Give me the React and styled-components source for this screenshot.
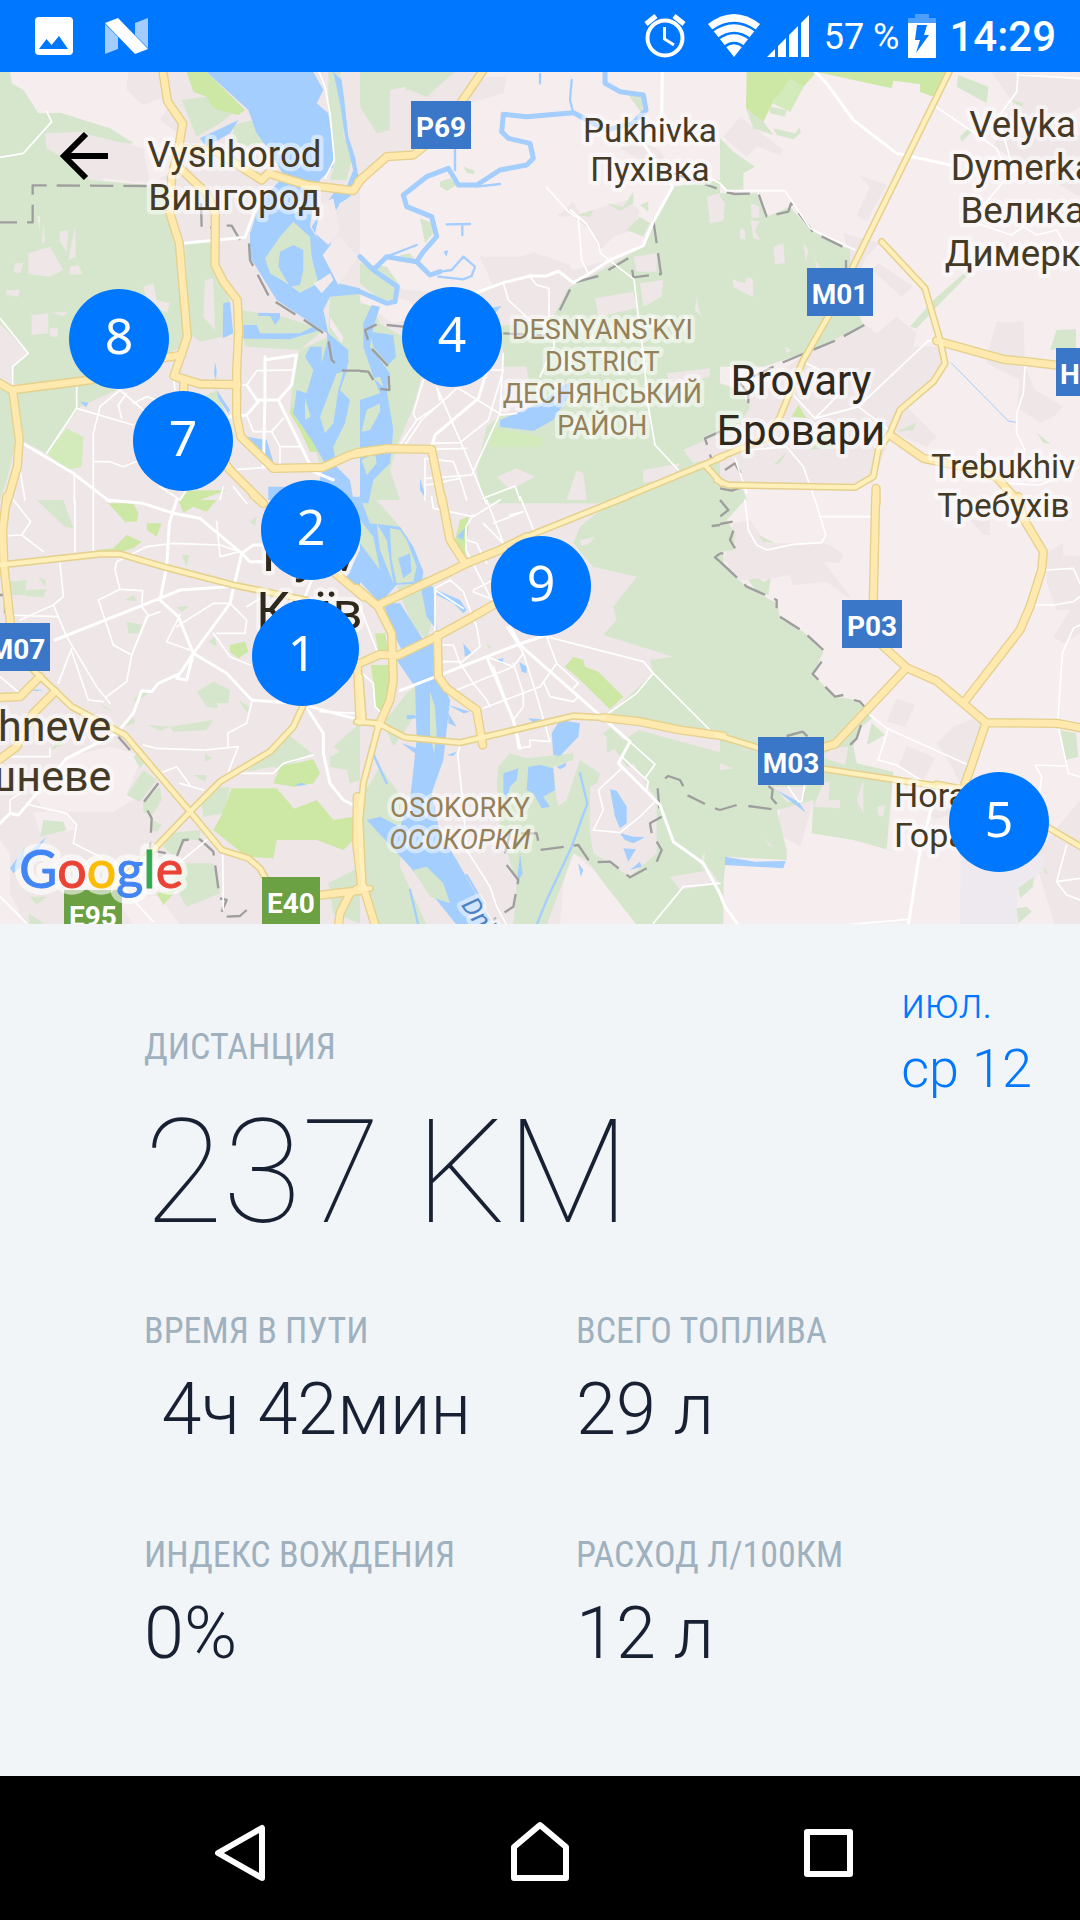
import React from "react";
import styled, { createGlobalStyle } from "styled-components";

const GlobalStyle = createGlobalStyle`
  *, *::before, *::after { box-sizing: border-box; }
  body { margin: 0; background: #f1f5f8; font-family: Roboto, "Noto Sans", sans-serif; }
  h1, p, dl, dd, ul { margin: 0; padding: 0; }
  button { border: 0; padding: 0; background: none; cursor: pointer; }
  svg { display: block; }
`;

const Screen = styled.div`
    display: flex;
    flex-direction: column;
    min-height: 100vh;
`;

/* ---------- status bar ---------- */

const StatusBar = styled.header`
    display: flex;
    align-items: center;
    justify-content: space-between;
    height: 72px;
    padding: 0 24px 0 35px;
    background: #0077ff;
    color: #fff;
`;

const StatusGroup = styled.div`
    display: flex;
    align-items: center;
    gap: ${p => p.$gap}px;
`;

const Battery = styled.span`
    padding: 2px 2px 0 8px;
    font-size: 36px;
    line-height: 44px;
`;

const Clock = styled.time`
    padding: 2px 0 0 6px;
    font-size: 42px;
    font-weight: 500;
    line-height: 48px;
`;

/* ---------- map ---------- */

const MapArea = styled.section`
    position: relative;
    width: 100%;
    aspect-ratio: 90 / 71;
    overflow: hidden;
    background: #eee6e7;
`;

const MapSvg = styled.svg`
    width: 100%;
    height: 100%;
`;

const BackButton = styled.button`
    position: absolute;
    left: 48px;
    top: 48px;
    width: 72px;
    height: 72px;
`;

const Pin = styled.li`
    position: absolute;
    left: ${p => p.$x / 10.8}%;
    top: ${p => p.$y / 8.52}%;
    width: 100px;
    height: 100px;
    margin: -50px 0 0 -50px;
    border-radius: 50%;
    background: #0077ff;
    color: #fff;
    font-family: "Noto Sans", sans-serif;
    font-size: 50px;
    line-height: 92px;
    text-align: center;
    list-style: none;
`;

/* Sectors of the map, 3 units per pixel, each one with its own origin */
const sectors = [
    {
        x: 0, y: -6,
        rural: "M30 0H385L380 60 430 105 480 85 505 110 480 150 540 195 530 300 430 350 300 340 400 215 300 180 110 130 70 60 30 40Z",
        woods: "M0 0H30L35 40 70 60 115 130 180 128 330 175 400 220 300 215 250 185 140 190V235L185 260 270 330 440 345 500 350 520 500 545 560 560 700 550 830 500 850 270 940 230 950 0 940ZM555 520L640 510V600L690 690 665 800 600 815 570 790ZM545 90L620 80 700 130 660 160 590 200ZM700 165L760 150 800 215 750 230 700 215ZM720 720L850 740 970 780 900 840 735 830ZM985 6H1020L1035 100 1030 200 1060 250 1040 330 990 330 1005 280 1000 200 985 120ZM990 680L1080 665V1160L960 1190 940 1110 870 1030 880 900 900 840 985 800ZM40 960L270 930 350 960 240 1010 140 1150 60 1110ZM0 960H35L50 1110 20 1230 0 1290ZM610 980L650 960 680 1040 610 1030Z",
        clear: "M85 550L150 530 190 600 150 620 85 612ZM178 485L205 480 200 545 180 515ZM225 470L228 560 205 570ZM20 660L60 660 55 680 20 675ZM95 735L145 730V790L95 795ZM45 580L70 580 60 610 40 605ZM235 585L248 612 208 615 210 590ZM130 460L135 515 125 520ZM110 435L120 440 120 485ZM0 760L85 850 40 890 35 945 0 930ZM430 650L460 640 470 690 510 700 500 730 440 690ZM615 630L640 625 645 780 610 740ZM135 190H250L430 235 450 340 270 320 235 260 140 235ZM150 728L205 725 190 738ZM150 775H173V800H150Z",
        parks: "M560 6H620L735 120 715 135 640 115 620 80 580 65ZM875 1000L890 1050 950 1110 955 1145 930 1145 900 1080 870 1030ZM560 1262L680 1260 600 1290H540Z",
        pale: "M200 1075L250 1100 245 1190 200 1200 140 1150Z",
        water: "M620 6H940L970 60 950 100 985 130 1000 230V290L960 330 860 330 800 230 770 190 745 120ZM600 205L715 150 690 190 620 230ZM790 385L860 310 960 330 940 400 930 470 985 560 1015 640 1080 655V672L990 680 970 720 985 790 1045 840V880L1030 905 990 870 980 790 920 750 830 690 780 610 750 560V490L770 430ZM1000 6L1025 30 1035 110 1045 200 1065 260 1075 320 1050 380 1020 400 980 470 1010 600 980 560 935 470 1000 370 1040 350 1060 300 1035 200 1020 100ZM730 765H770L780 790 900 790 940 770 960 780 870 808 730 806ZM670 700L690 695 700 790 668 805ZM775 728L840 730 840 745 825 765 810 738 775 738ZM985 800L1045 850 1040 905 1020 960 1050 990 1035 1060 1000 1130 1010 1190 1050 1230 1060 1290H940L975 1180 935 1110 880 1030 890 960 920 970 940 900 915 860 930 830 965 830V880ZM740 1100L800 1110 820 1175 780 1165ZM650 960L690 1020 685 1030 655 985ZM805 1250H900V1290H805ZM645 875L650 900 648 930 642 910ZM240 995L265 998 258 1012Z",
        islands: "M880 455L930 500 935 560 955 640 900 668 860 640 810 610 795 565 840 500ZM1010 910L1030 905 1015 960 1000 1060 975 1090 960 1040ZM915 985L932 1040 915 1050Z",
        lakes: "M840 545L880 525 910 540V600L900 645 870 650 835 590Z",
        sands: "M945 490L965 400 1000 385 1020 480 985 525ZM1015 495L1075 560 1015 645 968 555ZM940 640L960 630 990 610 1000 630 965 670ZM990 740L1030 800 1025 820 990 770Z",
        main: "M488 0L503 95 548 160 535 240 515 320 510 430 538 520 548 640 562 800 522 918 600 942 712 944M535 290L620 370 646 430 645 585 670 635 712 690 716 780 710 900V1040L722 1100 820 1195 970 1192 1050 1155 1160 1136M535 235L650 245 785 330 805 310 920 345 1060 362 1085 325M-10 935L35 960 270 930 450 870 545 855M38 960L58 1110 52 1190 20 1300M552 930L550 1000 690 1200 790 1300",
        street: "M0 262L70 250 155 155 140 125M0 745L85 850 38 890V950M230 950V1015L140 1150M230 1015L400 1065M280 1290V1090L300 1010 360 960 430 1020M380 970L355 1005 365 1045M400 1000L440 980 470 990M710 945H740L770 902 875 900M740 1035L760 1085 815 1085 850 1045M815 1085L840 1130V1180M840 1130H900M690 1200L800 1192M955 0L975 50 990 130 1003 270 975 325M280 1175L330 1175 370 1190 420 1170M223 1215V1300M60 1200L75 1290M520 920L525 960M480 1250L540 1290 560 1260M670 1250L660 1290M700 1250L740 1300",
        avenue: "M550 520L735 502 765 420M60 1115L220 1210 330 1295M795 870L890 855 875 945 835 990 940 1205 1000 1230M795 860V990L790 1190M740 945L770 990 835 990M690 1040L740 1035 775 995",
        border: "M440 348L98 346V457H0M603 400L605 475 640 472M680 467L695 467 720 510M747 520L750 570 810 685 900 742 965 785 985 810 995 870 1030 902 1080 902"
    },
    {
        x: 1080, y: -6,
        rural: "M300 80L380 0H1080V360L940 350 880 450 850 520 780 560 640 600 510 560 360 560 400 650 340 670 130 660 0 560V340L100 260 240 200ZM0 660L140 690 200 740 100 760 0 690Z",
        urban: "M358 555L420 585 520 547 630 585 640 640 600 605 430 635 400 625ZM640 440L700 420 800 390 840 420 820 480 760 500 720 540 690 480ZM590 440L640 395 660 430 610 440ZM380 20L440 20 430 70 330 98 320 60ZM780 235L850 215 900 240 930 300 870 285Z",
        woods: "M0 0H290L200 80 150 60 90 70V180L50 190 0 110ZM940 350L1080 330V1300H370L350 1200 380 1070 430 1030V860L420 770 580 740 625 655 690 620 850 530 880 450ZM0 580L80 590 115 640 110 690 60 690 0 640ZM0 700L40 710 60 760 130 800 180 850 190 900 160 1010 110 1130 90 1200 120 1290H0ZM240 335L270 325 290 345 260 363 240 350ZM310 290L340 300 345 312 320 308ZM180 445L220 460 220 490 195 520ZM650 435L700 420 690 440ZM740 400L790 410 820 365 820 400 780 422ZM805 75L850 80 845 130 820 95ZM800 480L840 440 870 460 850 500ZM120 555L150 550 170 575 140 580ZM840 405L865 395V425Z",
        clear: "M705 685L820 665 830 715 715 740ZM840 640L910 630 905 680 850 710ZM430 890L500 890 520 1020 400 1040ZM970 1140L1080 1090V1160L1000 1180ZM850 1200L960 1180 940 1220 850 1240ZM410 1220L470 1195 525 1220 450 1260ZM650 1200L670 1210 680 1290H620ZM1040 380L1080 370V455L1050 460ZM920 910L1050 895V920L930 950ZM90 60L135 50 150 80 130 135 90 130ZM1010 680L1005 720 1025 740 1015 710ZM820 560L890 550V605H830Z",
        pale: "M400 1075L545 1100V1130H390Z",
        water: "M420 1050L540 1000 630 935 625 980 580 1050 520 1083 420 1070ZM30 785L100 795 108 860 85 885 40 830ZM35 705L60 710 40 770 30 830 90 910 80 960 90 1020 100 1080 90 1180 40 1230 25 1300H0V990L60 970 40 920 10 830V760ZM180 1225L200 1290 180 1260ZM250 545L265 540 260 560ZM385 715L425 708 400 735Z",
        islands: "M20 1020L60 1000 60 1025 30 1080 5 1085ZM5 1170L45 1150 50 1180 20 1215ZM40 925L60 920 70 950Z",
        river: "M735 0V40L780 65 850 75 858 120 820 160 740 180 640 128 500 140 430 133 425 185 445 205 510 220 520 265 500 285 420 300 350 345 295 345 265 295 200 320 130 375 140 410 215 440 230 500 190 545 170 575 80 560 40 600 0 560M40 600L112 650 105 695 80 700 0 665M170 575L210 615 240 605",
        brook: "M635 30L630 90 640 130M285 240V300M350 350L420 342M240 605L275 600 310 560 345 590 335 618 310 628 235 620M80 560L170 525M260 463L330 462M307 463V495M540 12V40",
        main: "M-5 335L80 260 160 255 240 190 370 0M-10 1148L80 1136 215 1138 247 1300",
        light: "M750 1300L1090 1160M1035 1185L1085 1240",
        street: "M560 352L625 425 655 445 665 570 685 612M632 420L678 460 715 520 722 550 822 628 835 740 850 850 865 1010 885 1125 955 1200M430 640L445 690 510 750 580 770 582 830 540 920M510 620L530 645 567 655V740M230 950L330 1180 378 1300M295 955L425 1035 470 1030M430 850L420 1030 335 1215M290 955L230 1010 170 1050 120 1125M270 975L185 1050 135 1125M190 930L160 1030 170 1050M215 1120L300 1118 385 1050 430 900 395 900M215 1138L320 1135M195 1290V1165L280 1175 300 1225 200 1245M335 1215L200 1225M370 1285L465 1248 480 1290M300 1225L320 1290M230 950L240 990M940 320L1000 300 1080 340",
        avenue: "M350 668L430 638 510 618H560L595 603 640 638 685 612 750 570 850 527 880 455 938 350 850 220 905 140 907 0M215 1130L225 1095 355 985 380 905",
        border: "M880 450L903 612 820 622 812 570M805 565L745 600M715 618L640 638 595 730M80 765L130 770M430 790L560 797M50 763L15 780 30 830 85 890 88 960 50 955M0 903L25 905 40 930M940 310L1070 355M1080 1085L1035 1105 1055 1170"
    },
    {
        x: 2160, y: -6,
        rural: "M0 0H1080V1290H0Z",
        urban: "M0 1240V1100L60 990 330 800 430 760 470 790 530 740 590 790 580 830 670 830 660 900 550 1000 650 1100 620 1130 520 1090 470 1200 460 1240ZM800 860L830 755H910L915 890 945 960 1030 1010 1000 1040 960 1060 890 1010 900 930 800 880ZM10 200L60 140 190 240 180 255 110 230 80 260ZM455 600L475 580 580 650 545 680ZM415 315L500 345 440 455 410 435 450 350ZM370 490L480 520 440 560 420 600 390 590ZM810 0L1080 30V110L1000 160 1080 200V380L820 230 880 100Z",
        woods: "M0 370H110L140 440 210 410 270 480 390 540V600L420 740 430 765 280 840 130 890H0ZM0 205L40 245 105 290 70 310V360H20L0 340ZM78 115L130 155 160 195 100 175ZM150 110L200 120 195 140 150 130ZM160 175L225 190 240 172 242 190 220 208 170 195ZM570 770L640 690 860 497 650 710 590 775ZM1010 780L1068 778V835L990 840ZM715 15L805 50 800 100 710 50ZM720 200L745 175 755 185 725 215ZM0 940L60 960 90 1010 60 1060 0 1100ZM0 1220L70 1260 80 1290H0ZM270 1140L330 1060 370 1080 345 1130ZM530 1085L590 1058 580 1080ZM950 1088L992 1122 970 1118ZM875 90L910 100 900 115ZM160 1185L200 1145 180 1180Z",
        clear: "M160 530L190 520 195 580 165 583ZM92 450L120 455 105 480 120 510 100 505ZM60 475L75 480V508L60 505ZM38 628L75 640 80 622 98 625 100 680 75 670 40 650ZM250 520L265 540 258 580ZM285 568L300 590 290 595ZM0 380L15 400 10 450 0 455ZM92 400L118 410V443H95ZM195 830L215 840 200 850Z",
        parks: "M80 6H290L250 50 210 125 165 85 130 155 78 115ZM290 6H685L640 80 600 65V42L520 32 515 55ZM235 1005L260 1045 215 1040Z",
        pale: "M210 25L250 50 210 125 158 100Z",
        stream: "M693 878L865 1053 888 1057",
        main: "M650 812L850 868 920 875 1090 895M510 1095L610 1165 730 1190 830 1222 895 1295M468 1255V1300",
        light: "M-10 1165L140 1105 180 1040 250 870 330 730 695 -10M-10 1230L25 1245 405 1252 460 1220 475 1140 510 1090 540 1020 640 935 675 880 660 810 615 655 485 515",
        street: "M0 340L20 362H195L270 475 405 540M645 108L830 235 845 270 800 290M895 0L890 65 835 140 880 300 770 430M640 812H625L415 1010 285 1045 220 975M240 870L300 900 330 940M285 1045L360 970M415 1010L520 1090M915 890L910 970 890 1030V1090L915 1140M0 1130L90 1140 200 1130 250 1190 285 1290M45 1165L80 1270M770 460L875 495 910 470 950 495 1010 480 1080 600M860 1240L960 1245 1080 1190M830 300H1000M890 15L1080 25",
        avenue: "M285 5L320 40 400 150 530 250 690 285",
        border: "M20 367L45 372 115 370 140 440 205 425 213 400 280 487 388 540M378 570V600M433 765L350 810 170 885 100 920M60 940L85 970V1000M15 1200L45 1180 65 1215M0 1255L35 1262 70 1250"
    },
    {
        x: 0, y: 1284,
        rural: "M330 740L400 760 420 790 380 880 410 895 340 935H140L100 890 200 770ZM0 1020L30 1060V1180L80 1275H0ZM330 1170L480 1190 540 1275H400ZM100 935L200 940 230 990 120 1000Z",
        woods: "M110 0H190L220 85 195 80ZM750 65L770 50 765 78ZM30 245L80 240 75 285 35 285ZM115 232L138 240 135 260ZM80 270L138 268 130 292 75 288ZM545 165H568L560 200ZM380 365L425 375 420 400 385 400ZM375 300L400 285 410 303ZM530 320L570 318 545 335ZM590 575L640 545 690 570 685 610 650 610 655 625 620 620ZM445 675L510 680 480 692ZM510 680L640 660 620 690 520 695ZM715 600L748 620 742 640ZM300 610L340 635 315 625ZM370 680L400 650 405 670ZM400 770L430 750 440 780 420 805ZM430 810L470 840 420 905 380 885ZM430 905L480 860 485 900 455 948 430 935ZM455 960L485 975 470 995 450 990ZM580 825L620 825 615 845ZM615 760L635 775 615 785ZM640 865L690 860 670 940 610 950 605 910ZM820 750L860 700 935 760 840 810 820 800 740 815ZM990 770L1020 755 1000 740 1080 670V840L1050 850 1040 810 990 800ZM500 1000L600 990 600 1020 560 1020 520 1070 490 1040ZM530 1090L640 1090 660 1180 560 1220 520 1150ZM130 960L190 965 200 990 120 1010ZM90 1190L140 1190 110 1215ZM985 1150L1080 1100V1270L1000 1240ZM625 425L645 410 650 440ZM150 750L185 715 190 735ZM400 600L425 570 445 580 410 605ZM85 1240L140 1275H90Z",
        parks: "M695 865H830L890 935 860 935 950 900 1000 960 1060 950 1070 1010 1030 1050 950 1020 830 1020 820 1075 740 1070 640 990 665 945ZM840 800L940 778 960 820 940 850 880 860 820 850ZM325 10L400 10 415 40 410 65 375 65ZM535 0H650L620 35 580 20 550 38ZM440 70L485 70 470 110 440 90ZM290 150L340 145 380 105 425 125 400 145 350 160H290ZM690 435L735 425 745 455 715 475 690 455ZM470 1180L530 1170 490 1215Z",
        water: "M30 1105L75 1040 70 1070 140 1010 100 1070 40 1120ZM880 858L905 848 920 855ZM85 568L130 570 110 574ZM1040 230L1080 150V270Z",
        main: "M20 -10L8 90 12 200 32 375M-10 593L60 590 120 530M-10 785L50 740 100 640 165 575M760 -15L790 10M1000 215L1090 290M950 1187L1090 1170M1072 490L1080 665M1072 890L1070 1030 1085 1160 1050 1180 1020 1240 1015 1280",
        light: "M0 195L300 162H360L500 203 700 255 920 300M910 615L880 680 810 755 660 845 570 935 450 1060 340 1160M100 510L215 620 375 705 570 935 665 1050 745 1075 780 1105 810 1160",
        street: "M225 0V155M280 0V160M10 108L65 105 130 155M40 0L92 65 65 105M350 185L440 140 520 130 660 135 720 155M180 190L190 290 160 315 200 410 290 560 330 610M350 185L345 210 360 268 428 272 425 320 445 345 395 465 380 545 320 590M360 268L295 300 340 435 395 465M160 315L60 360M215 445L175 550M395 465L440 350 480 335M650 65L660 170 720 155M690 310L740 360 735 400 650 400M540 345L500 425 570 450M740 320L790 290M640 400L690 470 750 495M610 750L470 745 430 735M615 750L715 740 685 815M685 740L683 700 740 670 755 605M480 820L530 800 570 855M720 820L820 820 850 790 940 765M0 770H150V745M30 940V900L60 880M90 915L200 940 230 975 220 1030 300 1070 400 1200 460 1265M668 1060L670 1230M0 1190L80 1270M530 380L640 310 690 310M215 455L265 600 310 605M20 345L175 350M0 530L60 580M535 1090L620 1020M960 635L1080 640M540 850L610 870",
        avenue: "M320 0L430 10 520 40 600 55 725 160 690 310 580 460 560 540 530 535 575 470M530 0L508 70 500 200 480 300 535 350 580 460 680 520 755 600 910 612M725 160L750 185 790 185M165 420L480 295 540 270 660 262 700 258M580 460L540 520 475 550 455 575 425 572 400 640 350 700 200 775 55 945 30 940 0 970M930 300L915 290 935 240M915 615L970 700V760L990 850 1030 900 1080 925M725 160L760 135H790M930 620L1080 660",
        border: "M0 285H15V340M355 710L390 750M475 850L430 908 455 955 450 1050 500 1060M530 1070L550 1020 600 1018 640 1055 655 1165M660 1195L680 1200 665 1235M680 1250L720 1248 740 1230"
    },
    {
        x: 1080, y: 1284,
        rural: "M640 1060L690 1100 840 1210 830 1275H600L610 1150Z",
        woods: "M760 0H1090V700L800 670 735 655 880 520 870 480 940 470 730 405 770 360 760 320 830 230 700 200 640 130 660 80ZM0 -10H40L120 80 100 260 0 200ZM110 260L200 230 220 350 200 420 160 380ZM730 700L770 670 870 700 1090 760V1275H830L740 1160 680 1080 640 1060 560 1275H460L470 1150 440 1050 480 1000 620 900 660 780 720 820 700 900 800 800ZM740 700L790 730 740 760ZM415 800L450 760 500 775 640 760 640 780 580 800 590 900 610 960 520 1010 420 1000 410 850ZM0 900L60 800 130 900 120 1100 200 1275H60L0 1150ZM140 580L165 560 170 640 100 740 70 670ZM380 430L395 440 385 445Z",
        clear: "M660 120L705 110 690 130 665 138ZM760 640L840 690 790 720 730 660ZM690 860L820 790 890 900 890 1060 810 1130 700 1060 690 1000ZM930 1130L1050 1110 1080 1150 960 1170ZM160 110L190 160 150 150ZM1020 1090L1035 1050 1030 1110Z",
        parks: "M300 60L325 50 325 90 315 170 285 120ZM45 400L75 400 85 455 55 455ZM33 495H88L85 600 60 635 48 620ZM640 470L670 480 675 500 715 515 790 590 750 628 650 530 615 500Z",
        water: "M-60 -10H0L30 70 120 80 160 140 190 215 185 250 110 255 60 310 0 245V130L60 210 40 110 0 60ZM70 310L120 310 190 420 215 415 235 520 270 600 250 780 215 880 240 1000 290 1080 400 1275H290L150 1100 20 960 60 950 120 980 150 900 170 720 165 560 110 480 130 460 100 400ZM180 250L220 260 230 390 200 350ZM230 270L300 300 320 330 310 340 280 310 230 285ZM575 700L600 660 660 670 655 710 600 768 580 765ZM505 800L540 795 580 805 585 870 550 890 570 920 545 925 520 880 500 870ZM430 820L475 805 470 840 450 860 440 900 430 880ZM750 868L770 872 800 920 800 970 780 985 765 950ZM780 1000L820 1010 855 1012 820 1030 795 1020ZM790 1045L828 1048 805 1085ZM810 1110L840 1085 845 1100ZM590 800L620 788 615 800 600 808ZM310 430L335 460 315 470ZM405 480L430 475 428 492ZM478 487L500 500 500 520 485 515ZM655 1090L670 1110 662 1130ZM290 110L315 85 310 120ZM140 645L165 645 170 655 140 658ZM265 640L290 680 265 670ZM505 655L545 658 520 668ZM260 765L290 755 280 768ZM470 1150L480 1060 488 1120ZM125 730L170 745 165 760ZM265 615L330 635 310 640Z",
        islands: "M90 85L120 90 140 120 170 200 160 245 110 250 95 180ZM50 70L80 120 100 250 60 150ZM160 1110L200 1100 250 1150 270 1210 210 1190ZM210 575L225 620 230 700 222 760 210 700Z",
        lakes: "M115 175L150 160 155 215 130 235Z",
        brook: "M660 820L682 910 635 1040 560 1200 530 1275M150 1170L175 1275M320 1125L370 1210M30 740L80 850",
        main: "M245 -10L270 120 315 190M-10 265L55 320 95 400 100 540 90 600 55 680M55 315L270 215 320 190 420 150 500 110M0 490L60 463 115 466 230 410 330 355 400 315M232 405L235 530 260 565 350 630 368 735M730 653L840 665 960 690 1090 708M10 1160L50 1290",
        light: "M500 110L800 -10M-10 665L55 670 135 712 300 728 640 648 730 653M55 680L10 850 0 960 10 1165M0 530L10 660M30 1165H0",
        street: "M215 -10L220 25 340 50 420 0M340 45L318 80V150L390 290M380 0L430 130M400 70L490 35 450 45M480 -10L525 100M225 400V265L270 240 310 275 330 330 350 380 360 440 300 490M225 270L310 325M340 270L400 240M340 275L400 300M240 435H280L300 490 340 550 380 600 390 620M240 485H300M380 470L460 500 490 460 440 380M290 570L460 500M370 625L540 560 590 490 560 410 850 485 880 520 1050 690M490 460L525 570 570 725 510 720V740L475 745 462 665 400 500M460 490L490 580V620L460 660M550 545L570 590 640 605 655 590M880 520L830 580 745 640M590 490L655 550 640 565M300 735L293 765 310 920 320 1050 390 1160 410 1220 440 1275M815 730L885 793 855 835M785 770L865 845 860 870M785 805L715 870 730 930 700 990 780 998 840 950 885 905M1080 1150L970 1160 880 1270M370 70L430 130M0 515L40 550 45 620 65 640M0 320L50 450M320 120L350 130 380 190",
        avenue: "M120 572L470 435 560 405M450 380L480 435 730 655 810 725 775 790 900 915 940 1025 1030 1090 1085 1190M380 470L460 660 480 745",
        border: "M1055 78L1080 75M1080 160L1065 172 1080 185M915 835L925 828 960 840 985 887 1035 912M1065 925L1080 930M893 865L898 925M905 950L870 970 875 1000 905 1050 890 1085M860 1105L810 1132 750 1085 690 1087 655 1035 540 1050 530 1000 450 1000 435 1060M440 1095L475 1140 460 1220 400 1260"
    },
    {
        x: 2160, y: 1284,
        rural: "M0 -10H1080V1290H0Z",
        urban: "M40 70L90 60 140 130 310 130 330 135 370 165 355 190 310 185 395 295 380 290 320 245 220 255 210 225 130 240 80 240 10 180ZM530 595L585 615 555 680 500 665ZM560 738L645 775 610 840 535 800ZM700 680L760 655 800 670 750 820 720 850 690 790 650 730ZM980 160L1030 130V165L1080 170V400L1030 430 1000 410 1050 330 1010 330 980 250ZM750 60L810 60V105H790ZM940 1070L1080 900V1290L1010 1290 960 1130ZM180 920L280 900 270 940 240 1040 175 1000ZM620 920L700 900 700 940 640 960ZM0 240L40 180 90 240Z",
        grey: "M722 1050L800 1030 940 1050 975 1080 940 1150 893 1170 890 1290H720Z",
        woods: "M0 190L80 260 170 310 180 350 250 395 310 455 280 525 345 590 410 600 455 655 425 680 400 740 410 790 520 815 500 1050 525 1055 400 1020 275 1000 280 900 170 930 200 1050V1080L20 1070 10 1145H0ZM85 240L115 235 130 245 152 235 145 285 110 275ZM455 668L495 705 440 735ZM115 105L165 130 130 125ZM0 0H75L20 60 45 100 40 150 0 155ZM895 1165L940 1130V1160L900 1195ZM890 1225L920 1220 935 1235 895 1270ZM1020 690L1068 700 1075 770 1035 780ZM970 1100L985 1120 975 1122ZM0 1150L10 1150V1230H0Z",
        clear: "M310 850L330 845 325 900 360 900V925L280 920ZM470 920L495 915 490 950 475 945ZM130 1015L160 1040 145 1035ZM340 745L385 740 375 795 300 770ZM0 790L40 805 0 810ZM410 900L430 840 430 940ZM60 745L110 755 70 750ZM160 860H260L240 905H200Z",
        water: "M15 1070L105 1085 197 1083 190 1105 15 1095ZM165 868L235 905 258 938Z",
        main: "M467 -10L460 300M480 430L560 503 650 543 730 610 798 668 1010 670 1090 685M895 -10L910 55 970 155 965 210 930 320 900 390 730 610M798 668L750 810 735 850M560 503L345 732 300 745M650 855L730 870",
        light: "M-10 705L120 745M300 805L650 858 740 880M980 980L1090 1045",
        street: "M75 0L85 90 110 135 140 150 220 133 305 128 317 105 300 48 285 0M300 50H450M450 645L500 685 745 795M505 685L475 780 530 795 610 845 650 850M980 210L1060 205 1080 250M945 315L1000 315 1060 305 1080 290M1080 375L1060 385 1027 460 1013 670 1045 820 1080 830M945 795L1035 798M945 795L965 830 960 870M1040 1035L1010 1145 1040 1185 1080 1200M1010 1145L1080 1135M205 860L235 905 245 905 255 850M370 1275L565 1258",
        avenue: "M655 860L630 940 600 1050 565 1275M-5 1170L15 1220 55 1275",
        border: "M0 0L25 30 0 50M0 72L38 65M40 92L30 120 45 145M0 160H10M0 185L80 260 170 300V325M180 350L250 395 310 450M305 485L278 522 345 590 370 585M402 600L420 605 437 625M423 675L410 715 390 735M200 708L248 695 265 712M145 858L158 868 155 895 170 912M0 930L50 915M85 918L160 928"
    }
];

/* paint order, bottom to top */
const layers = [
    { key: "rural", fill: "#f6edef" },
    { key: "urban", fill: "#eee6e7" },
    { key: "grey", fill: "#eee9ee" },
    { key: "woods", fill: "#d6e6cc" },
    { key: "clear", fill: "#eee6e7" },
    { key: "parks", fill: "#cde7a4" },
    { key: "pale", fill: "#d3eabb" },
    { key: "water", fill: "#a4cefe" },
    { key: "islands", fill: "#d6e6cc" },
    { key: "lakes", fill: "#a4cefe" },
    { key: "sands", fill: "#f3eaec" },
    { key: "river", stroke: "#a4cefe", width: 15 },
    { key: "brook", stroke: "#a4cefe", width: 7 },
    { key: "stream", stroke: "#a4cefe", width: 3 },
    { key: "border", stroke: "#9e9e9e", width: 7, dash: "70 30" },
    { key: "street", stroke: "#fff", width: 5 },
    { key: "avenue", stroke: "#fff", width: 9 },
    { key: "main", stroke: "#e5d08c", width: 28 },
    { key: "light", stroke: "#e5d08c", width: 22 },
    { key: "main", stroke: "#ffe9ae", width: 20 },
    { key: "light", stroke: "#fff0bb", width: 13 }
];

const labels = [
    { x: 703, y: 284, size: 110, lines: ["Vyshhorod", "Вишгород"], step: 130 },
    { x: 1950, y: 210, size: 100, lines: ["Pukhivka", "Пухівка"], step: 118 },
    { x: 1807, y: 802, size: 81, lines: ["DESNYANS'KYI", "DISTRICT", "ДЕСНЯНСЬКИЙ", "РАЙОН"], step: 96, tone: "#948059" },
    { x: 3068, y: 196, size: 110, lines: ["Velyka", "Dymerka", "Велика", "Димерка"], step: 129 },
    { x: 2403, y: 970, size: 126, lines: ["Brovary", "Бровари"], step: 150, tone: "#2f281c" },
    { x: 3010, y: 1218, size: 100, lines: ["Trebukhiv", "Требухів"], step: 118 },
    { x: 928, y: 1496, size: 158, lines: ["Kyiv", "Київ"], step: 176, tone: "#2f281c" },
    { x: 334, y: 2006, size: 129, lines: ["Vyshneve", "Вишневе"], step: 152, anchor: "end" },
    { x: 2682, y: 2206, size: 102, lines: ["Hora", "Гора"], step: 118, anchor: "start" },
    { x: 1380, y: 2234, size: 82, lines: ["OSOKORKY"], step: 96, tone: "#948059" },
    { x: 1380, y: 2330, size: 82, lines: ["ОСОКОРКИ"], step: 96, tone: "#948059", italic: true }
];

const shields = [
    { x: 1233, y: 87, w: 180, text: "P69" },
    { x: 2421, y: 588, w: 198, text: "M01" },
    { x: 3168, y: 828, w: 180, text: "H07" },
    { x: 2526, y: 1584, w: 180, text: "P03" },
    { x: 2274, y: 1995, w: 198, text: "M03" },
    { x: -48, y: 1653, w: 198, text: "M07" },
    { x: 786, y: 2415, w: 174, text: "E40", green: true },
    { x: 192, y: 2454, w: 174, text: "E95", green: true }
];

const pins = [
    { x: 119, y: 267, text: "8" },
    { x: 183, y: 369, text: "7" },
    { x: 452, y: 265, text: "4" },
    { x: 311, y: 458, text: "2" },
    { x: 309, y: 577 },
    { x: 302, y: 584, text: "1" },
    { x: 541, y: 514, text: "9" },
    { x: 999, y: 750, text: "5" }
];

const MapLabel = styled.text`
    font-family: Roboto, sans-serif;
    font-size: ${p => p.$size}px;
    font-style: ${p => (p.$italic ? "italic" : "normal")};
    fill: ${p => p.$tone || "#453a26"};
    stroke: rgba(255, 255, 255, 0.5);
    stroke-width: 26px;
    stroke-linejoin: round;
    paint-order: stroke;
`;

const ShieldText = styled.text`
    font-family: Roboto, sans-serif;
    font-size: 84px;
    font-weight: 700;
    fill: #fff;
`;

const Wordmark = styled.text`
    font-family: Lato, sans-serif;
    font-size: 156px;
`;

const WordmarkHalo = styled(Wordmark)`
    fill: none;
    stroke: rgba(255, 255, 255, 0.6);
    stroke-width: 40px;
    stroke-linejoin: round;
`;

const Letter = styled.tspan`
    fill: ${p => p.$color};
    stroke: ${p => p.$color};
    stroke-width: 3px;
`;

const wordmark = [
    ["G", "#4285f4"],
    ["o", "#ea4335"],
    ["o", "#fbbc05"],
    ["g", "#4285f4"],
    ["l", "#34a853"],
    ["e", "#ea4335"]
];

const CityMap = () => (
    <MapSvg viewBox="0 0 3240 2556" preserveAspectRatio="xMidYMid slice">
        {layers.map((layer, i) => (
            <g
                key={i}
                fill={layer.fill || "none"}
                stroke={layer.stroke}
                strokeWidth={layer.width}
                strokeDasharray={layer.dash}
                strokeLinejoin="round"
                strokeLinecap={layer.dash ? "butt" : "round"}
            >
                {sectors.filter(s => s[layer.key]).map(s => (
                    <path key={`${s.x}:${s.y}`} d={s[layer.key]} transform={`translate(${s.x} ${s.y})`} />
                ))}
            </g>
        ))}

        {labels.map(label =>
            label.lines.map((line, i) => (
                <MapLabel
                    key={line}
                    x={label.x}
                    y={label.y + i * label.step}
                    textAnchor={label.anchor || "middle"}
                    $size={label.size}
                    $tone={label.tone}
                    $italic={label.italic}
                >
                    {line}
                </MapLabel>
            ))
        )}
        <MapLabel transform="translate(1382 2500) rotate(55)" $size={78} $tone="#4c83c4" $italic>Dnipro</MapLabel>

        {shields.map(s => (
            <g key={s.text}>
                <rect x={s.x} y={s.y} width={s.w} height="144" fill={s.green ? "#6ba043" : "#3a77c8"} />
                <ShieldText x={s.x + s.w / 2} y={s.y + 107} textAnchor="middle">{s.text}</ShieldText>
            </g>
        ))}

        <Wordmark as="g">
            <WordmarkHalo x="58" y="2447" aria-hidden="true">Google</WordmarkHalo>
            <text x="58" y="2447">
                {wordmark.map(([letter, color], i) => (
                    <Letter key={i} $color={color}>{letter}</Letter>
                ))}
            </text>
        </Wordmark>
    </MapSvg>
);

/* ---------- trip info ---------- */

const Info = styled.main`
    flex: 1;
    padding: 52px 48px 72px 144px;
    background: #f1f5f8;
`;

const Summary = styled.div`
    display: flex;
    justify-content: space-between;
    align-items: flex-start;
    margin-bottom: 53px;
`;

const Distance = styled.div`
    padding-top: 50px;
`;

const Label = styled.p`
    color: #9fb1bf;
    font-family: "Roboto Condensed", Roboto, sans-serif;
    font-size: 36px;
    line-height: 42px;
`;

const Total = styled.h1`
    margin-top: 21px;
    color: #182033;
    font-size: 144px;
    font-weight: 100;
    line-height: 168px;
`;

const TripDate = styled.time`
    display: flex;
    flex-direction: column;
    gap: 5px;
    color: #0077ff;
    font-weight: 300;
`;

const Month = styled.span`
    font-size: 42px;
    line-height: 56px;
`;

const Day = styled.span`
    font-size: 54px;
    line-height: 64px;
`;

const Stats = styled.div`
    display: grid;
    grid-template-columns: 1fr 1fr;
    row-gap: 82px;
    margin-right: 24px;
`;

const Value = styled.p`
    margin-top: 16px;
    color: #182033;
    font-size: 72px;
    font-weight: 300;
    line-height: 84px;
    white-space: pre;
`;

const stats = [
    { label: "ВРЕМЯ В ПУТИ", value: " 4ч 42мин" },
    { label: "ВСЕГО ТОПЛИВА", value: "29 л" },
    { label: "ИНДЕКС ВОЖДЕНИЯ", value: "0%" },
    { label: "РАСХОД Л/100КМ", value: "12 л" }
];

/* ---------- navigation ---------- */

const NavBar = styled.nav`
    display: grid;
    grid-template-columns: repeat(3, 1fr);
    height: 144px;
    padding: 0 10%;
    background: #000;
`;

const NavButton = styled.button`
    display: flex;
    align-items: center;
    justify-content: center;
`;

const NavIcon = ({ d }) => (
    <svg width="96" height="96" viewBox="0 0 96 96" fill="none" stroke="#fff" strokeWidth="6" strokeLinejoin="round">
        <path d={d} />
    </svg>
);

const App = () => {
    return (
        <>
            <GlobalStyle />
            <Screen>
                <StatusBar>
                    <StatusGroup $gap={32}>
                        <svg width="38" height="38" viewBox="0 0 38 38">
                            <path fill="#fff" fillRule="evenodd" d="M4 0H34Q38 0 38 4V34Q38 38 34 38H4Q0 38 0 34V4Q0 0 4 0ZM4 32H33L24 19 16.500 28 11.500 22Z" />
                        </svg>
                        <svg width="43" height="36" viewBox="0 0 43 36">
                            <path fill="#a3cdff" d="M0 6L13 19V31L0 36ZM43 0V30L30 17V5Z" />
                            <path fill="#fff" d="M0 5L13 0 43 31 30 36Z" />
                        </svg>
                    </StatusGroup>
                    <StatusGroup $gap={7}>
                        <svg width="57" height="44" viewBox="0 0 57 44" fill="none" stroke="#fff">
                            <circle cx="21" cy="24" r="17.500" strokeWidth="4" />
                            <path strokeWidth="3" d="M20.500 13V25L30 31" />
                            <path strokeWidth="5" d="M2 10L12 2M30 2L40 10" />
                        </svg>
                        <svg width="52" height="44" viewBox="0 0 52 44">
                            <path fill="#fff" d="M0 10Q26 -10 52 10L26 43Z" />
                            <path fill="none" stroke="#0077ff" strokeWidth="2.500" d="M4 17Q26 1 48 17M10 25Q26 13 42 25M16 33Q26 25 36 33" />
                        </svg>
                        <svg width="42" height="44" viewBox="0 0 42 44" fill="#fff">
                            <path d="M0 43L8 35V43ZM11 32L19 24V43H11ZM22 21L31 12V43H22ZM34 9L42 1V43H34Z" />
                        </svg>
                        <Battery>57 %</Battery>
                        <svg width="28" height="44" viewBox="0 0 28 44">
                            <path fill="#4da0ff" d="M7 0H21V4H28V9H0V4H7Z" />
                            <path fill="#fff" d="M0 9H28V44H0Z" />
                            <path fill="#0077ff" d="M9 11H19L16 21H21L8 39 12 26H7Z" />
                        </svg>
                        <Clock>14:29</Clock>
                    </StatusGroup>
                </StatusBar>

                <MapArea>
                    <CityMap />
                    <ul>
                        {pins.map((pin, i) => (
                            <Pin key={i} $x={pin.x} $y={pin.y}>{pin.text}</Pin>
                        ))}
                    </ul>
                    <BackButton type="button" aria-label="Назад">
                        <svg width="72" height="72" viewBox="0 0 72 72" fill="none" stroke="#000" strokeWidth="6">
                            <path d="M60 36H16M38 14L16 36 38 58" />
                        </svg>
                    </BackButton>
                </MapArea>

                <Info>
                    <Summary>
                        <Distance>
                            <Label>ДИСТАНЦИЯ</Label>
                            <Total>237 KM</Total>
                        </Distance>
                        <TripDate dateTime="2017-07-12">
                            <Month>июл.</Month>
                            <Day>ср 12</Day>
                        </TripDate>
                    </Summary>
                    <Stats>
                        {stats.map(stat => (
                            <div key={stat.label}>
                                <Label>{stat.label}</Label>
                                <Value>{stat.value}</Value>
                            </div>
                        ))}
                    </Stats>
                </Info>

                <NavBar>
                    <NavButton type="button" aria-label="Back">
                        <NavIcon d="M58 28V78L14 53Z" />
                    </NavButton>
                    <NavButton type="button" aria-label="Home">
                        <NavIcon d="M22 78V47L48 25 74 47V78Z" />
                    </NavButton>
                    <NavButton type="button" aria-label="Recent apps">
                        <NavIcon d="M27 32H70V74H27Z" />
                    </NavButton>
                </NavBar>
            </Screen>
        </>
    );
};

export default App;
